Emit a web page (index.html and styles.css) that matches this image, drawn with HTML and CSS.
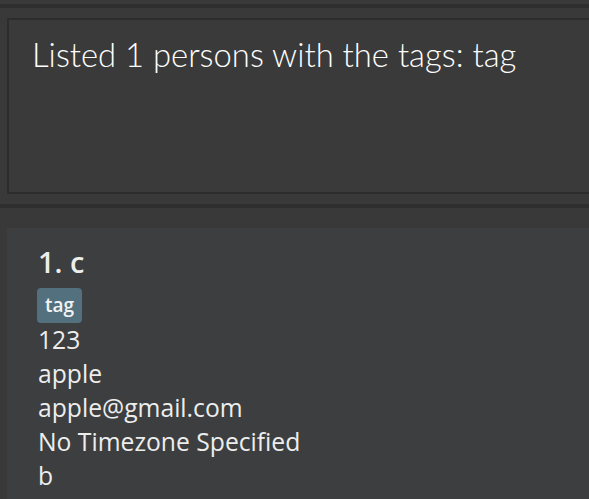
FILE: index.html
```html
<!DOCTYPE html>
<html>
<head>
<meta charset="utf-8">
<link rel="stylesheet" href="styles.css">
</head>
<body>
<div class="app">
  <div class="divider"></div>
  <div class="result-pane">
    <div class="result-box">Listed 1 persons with the tags: tag</div>
  </div>
  <div class="divider"></div>
  <div class="list-pane">
    <div class="card">
      <div class="name">1. c</div>
      <div class="tags"><span class="tag">tag</span></div>
      <div class="detail">123</div>
      <div class="detail">apple</div>
      <div class="detail">apple@gmail.com</div>
      <div class="detail">No Timezone Specified</div>
      <div class="detail">b</div>
    </div>
  </div>
</div>
</body>
</html>
```
FILE: styles.css
```css
html, body {
  margin: 0;
  padding: 0;
  background: #393939;
  overflow: hidden;
  height: 100%;
}
.app {
  padding-top: 4px;
  width: 620px;
}
.divider {
  height: 4px;
  background: #2e2e2e;
}
.result-pane {
  padding: 10px 0 10px 7px;
}
.result-box {
  box-sizing: border-box;
  height: 176px;
  border: 2px solid #2c2c2c;
  background: #3a3a3a;
  color: #ffffff;
  font-family: "Lato", "Open Sans", sans-serif;
  font-weight: 300;
  font-size: 32.8px;
  line-height: 44px;
  padding: 13px 0 0 23px;
}
.list-pane {
  padding: 20px 0 0 7px;
}
.card {
  background: #3c3e3f;
  height: 300px;
  padding: 15px 0 0 31px;
  color: #ededed;
  font-family: "Open Sans", "Noto Sans", sans-serif;
}
.name {
  font-size: 29px;
  font-weight: 600;
  line-height: 38px;
}
.tags {
  display: flex;
  margin-top: 7px;
}
.tag {
  background: #53707f;
  color: #f2f2f2;
  border-radius: 4px;
  font-size: 19px;
  font-weight: 600;
  line-height: 35px;
  padding: 0 8px;
  margin-left: -1px;
}
.detail {
  font-size: 24.7px;
  line-height: 34px;
}
```
